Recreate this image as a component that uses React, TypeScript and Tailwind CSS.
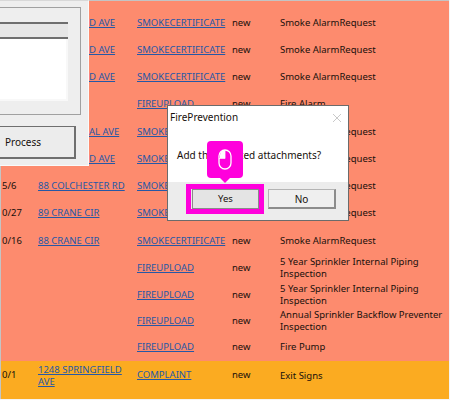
const rows = [
  { date: "", addr: "", addrEnd: "D AVE", link: "SMOKECERTIFICATE", status: "new", desc: "Smoke AlarmRequest" },
  { date: "", addr: "", addrEnd: "D AVE", link: "SMOKECERTIFICATE", status: "new", desc: "Smoke AlarmRequest" },
  { date: "", addr: "", addrEnd: "D AVE", link: "SMOKECERTIFICATE", status: "new", desc: "Smoke AlarmRequest" },
  { date: "", addr: "", addrEnd: "", link: "FIREUPLOAD", status: "new", desc: "Fire Alarm" },
  { date: "", addr: "", addrEnd: "AL AVE", link: "SMOKECERTIFICATE", status: "new", desc: "Smoke AlarmRequest" },
  { date: "", addr: "", addrEnd: "D AVE", link: "SMOKECERTIFICATE", status: "new", desc: "Smoke AlarmRequest" },
  { date: "5/6", addr: "88 COLCHESTER RD", addrEnd: "", link: "SMOKECERTIFICATE", status: "new", desc: "Smoke AlarmRequest" },
  { date: "0/27", addr: "89 CRANE CIR", addrEnd: "", link: "SMOKECERTIFICATE", status: "new", desc: "Smoke AlarmRequest" },
  { date: "0/16", addr: "88 CRANE CIR", addrEnd: "", link: "SMOKECERTIFICATE", status: "new", desc: "Smoke AlarmRequest" },
  { date: "", addr: "", addrEnd: "", link: "FIREUPLOAD", status: "new", desc: "5 Year Sprinkler Internal Piping Inspection" },
  { date: "", addr: "", addrEnd: "", link: "FIREUPLOAD", status: "new", desc: "5 Year Sprinkler Internal Piping Inspection" },
  { date: "", addr: "", addrEnd: "", link: "FIREUPLOAD", status: "new", desc: "Annual Sprinkler Backflow Preventer Inspection", cls: "h-[24px]" },
  { date: "", addr: "", addrEnd: "", link: "FIREUPLOAD", status: "new", desc: "Fire Pump", cls: "h-[28.25px]" },
  { date: "0/1", addr: "1248 SPRINGFIELD AVE", addrEnd: "", link: "COMPLAINT", status: "new", desc: "Exit Signs", cls: "h-[38px] bg-[#fbab21] pb-[9px]" },
];

function Row({ row }: { row: (typeof rows)[number] }) {
  return (
    <div className={`flex shrink-0 items-center ${row.cls ?? "h-[27.25px]"}`}>
      <div className="w-[37px] shrink-0 pl-px">{row.date}</div>
      <div className="w-[99px] shrink-0 pr-[8px] leading-[12px] text-[#2658a6] underline">
        {row.addr}
        {row.addrEnd && <span className="ml-[51px] whitespace-nowrap">{row.addrEnd}</span>}
      </div>
      <div className="w-[95px] shrink-0 whitespace-nowrap text-[#2658a6] underline">{row.link}</div>
      <div className="w-[48px] shrink-0">{row.status}</div>
      <div className="w-[165px] shrink-0 leading-[12px]">{row.desc}</div>
    </div>
  );
}

export default function App() {
  return (
    <div className="relative h-[400px] w-[450px] overflow-hidden bg-[#f4f4f4] font-['Noto_Sans',sans-serif] text-[9.5px] text-[#17100c]">
      <div className="h-[399px] w-[449px] overflow-hidden border-t border-l border-[#c4c4c4] bg-[#fd8b6e] pt-[8px]">
        {rows.map((row, i) => (
          <Row key={i} row={row} />
        ))}
      </div>

      {/* window behind the dialog, cut off by the left edge */}
      <div className="absolute top-0 left-0 h-[166px] w-[89px] border-t border-r border-b border-t-[#d8d8d8] border-r-[#fafafa] border-b-[#fafafa] bg-[#eeeeee] pt-[6px]">
        <div className="h-[108px] w-[81px] border-t border-r border-b border-[#a0a0a0] pt-[14px]">
          <div className="h-[17px] w-[68px] border-t-2 border-b-2 border-[#6e6e6e] bg-[#e6e6e6]" />
          <div className="h-[62px] w-[68px] border-r-2 border-b-2 border-[#f8f8f8] bg-white" />
        </div>
        <div className="mt-[11px] flex h-[33px] w-[76px] items-center border-t border-r-2 border-b-2 border-[#6f6f6f] bg-[#ececec] pl-[5px] text-[10px]">
          Process
        </div>
      </div>

      {/* confirm dialog */}
      <div className="absolute top-[105px] left-[167px] flex h-[116px] w-[182px] flex-col border border-[#6b6b6b] bg-white">
        <div className="flex h-[22px] items-center justify-between pt-[1px] pr-[6px] pl-[2px] text-[10px]">
          <span>FirePrevention</span>
          <svg width="10" height="10" viewBox="0 0 10 10" className="stroke-[#c9c9c9]">
            <path d="M1 1l8 8M9 1l-8 8" fill="none" strokeWidth="1" />
          </svg>
        </div>
        <div className="flex flex-1 items-start pt-[20px] pl-[9px] text-[10px]">Add the selected attachments?</div>
        <div className="flex h-[38px] items-start gap-[9px] bg-[#ececec] pt-[7px] pl-[24px]">
          <button className="h-[20px] w-[67px] border border-[#8a8a8a] bg-[#e4e4e4] pt-px text-[9.5px]">Yes</button>
          <button className="h-[20px] w-[68px] border-t border-r-2 border-b-2 border-l border-t-[#b4b4b4] border-r-[#8c8c8c] border-b-[#8c8c8c] border-l-[#b4b4b4] bg-[#efefef] pt-px text-[10px]">No</button>
        </div>
      </div>

      {/* tutorial highlight */}
      <div className="absolute top-[184px] left-[186px] h-[30px] w-[78px] border-[5px] border-[#ff00dc]" />
      <div className="absolute top-[141px] left-[207px] flex h-[37px] w-[36px] items-center justify-center rounded-[4px] bg-[#ff00dc]">
        <svg width="14" height="21" viewBox="0 0 14 21" fill="none" className="stroke-white">
          <path d="M7 1.5H6.5A4.5 4.5 0 0 0 2 6v3h5z" fill="white" stroke="none" />
          <rect x="1" y="1" width="12" height="19" rx="6" strokeWidth="1.3" />
          <path d="M7 1v8.5H1" strokeWidth="0.8" />
        </svg>
      </div>
      <div className="absolute top-[178px] left-[220px] size-0 border-x-[5px] border-t-[5px] border-x-transparent border-t-[#ff00dc]" />
    </div>
  );
}
